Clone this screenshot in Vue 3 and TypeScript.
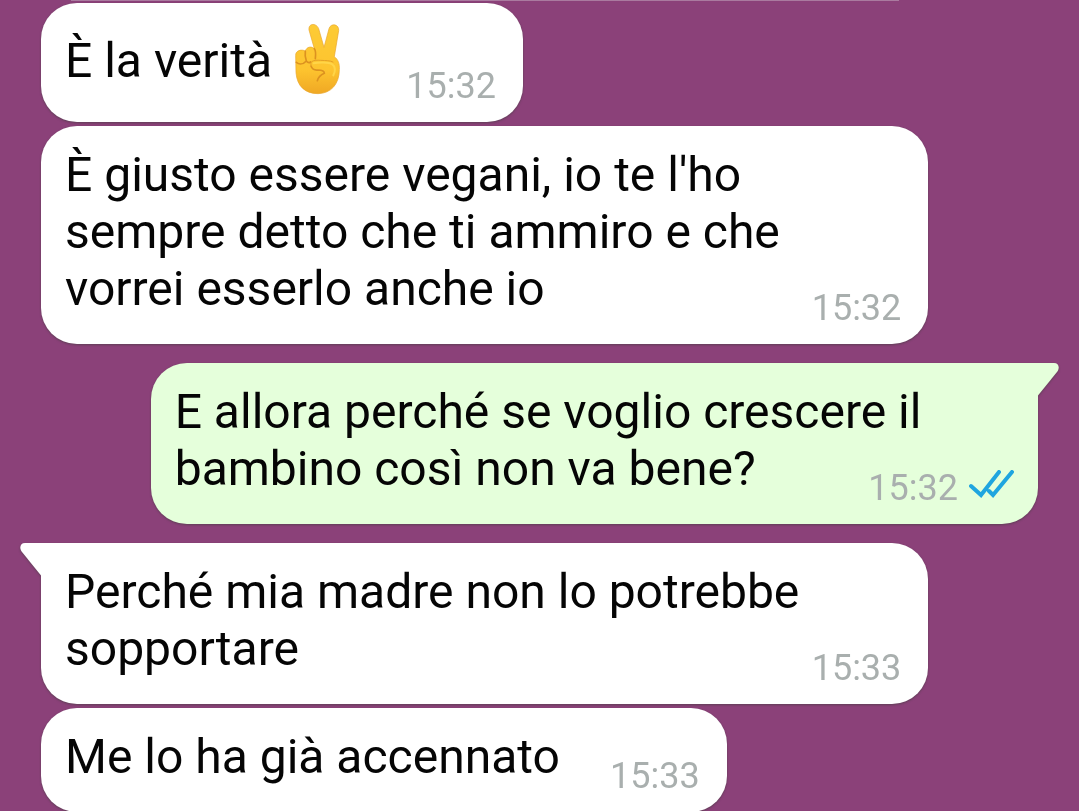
<script setup lang="ts">
interface Message {
  id: number
  text: string
  time: string
  outgoing?: boolean
  tail?: boolean
  emoji?: boolean
}

const messages: Message[] = [
  { id: 1, text: 'È la verità', time: '15:32', emoji: true },
  { id: 2, text: "È giusto essere vegani, io te l'ho sempre detto che ti ammiro e che vorrei esserlo anche io", time: '15:32' },
  { id: 3, text: 'E allora perché se voglio crescere il bambino così non va bene?', time: '15:32', outgoing: true, tail: true },
  { id: 4, text: 'Perché mia madre non lo potrebbe sopportare', time: '15:33', tail: true },
  { id: 5, text: 'Me lo ha già accennato', time: '15:33' },
]
</script>

<template>
  <main class="chat">
    <div class="earlier"></div>
    <ol class="messages">
      <li
        v-for="m in messages"
        :key="m.id"
        class="bubble"
        :class="{ outgoing: m.outgoing, incoming: !m.outgoing, tailed: m.tail }"
      >
        <svg v-if="m.tail" class="tail" viewBox="0 0 22 33" aria-hidden="true">
          <path d="M22 0H5C0 0-1 5 2 9L21 32.500H22Z" />
        </svg>
        <p class="text">
          {{ m.text }}
          <svg v-if="m.emoji" class="emoji" viewBox="12 39 216 216" role="img" aria-label="Vittoria">
            <defs>
              <linearGradient id="skin" x1="0" y1="0" x2="0" y2="1">
                <stop offset="0" stop-color="#fdcb35" />
                <stop offset="0.65" stop-color="#fdc42f" />
                <stop offset="1" stop-color="#f0a824" />
              </linearGradient>
            </defs>
            <path
              d="M87 60C84 39 109 38 116 56L132 112L147 56C152 38 178 42 176 62L163 140C174 148 179 160 178 178C178 222 154 250 114 251C76 251 51 229 48 188L47 137C46 121 65 117 76 123C80 110 94 108 103 116Z"
              fill="url(#skin)"
              stroke="#e9a62e"
              stroke-width="2"
            />
            <path
              d="M103 116C108 122 107 137 106 146M76 124C74 136 77 146 79 153M49 157C58 164 70 163 79 153C83 158 88 159 92 156M93 168C97 179 106 181 114 180C126 180 133 184 133 190C124 194 115 201 112 212"
              fill="none"
              stroke="#dc9220"
              stroke-width="5"
              stroke-linecap="round"
            />
            <path
              d="M93 166C88 150 108 150 122 151C138 152 150 151 159 156"
              fill="none"
              stroke="#e5a026"
              stroke-width="3"
              stroke-linecap="round"
            />
            <path
              d="M101 160C115 157 145 156 157 163C166 169 167 184 160 196"
              fill="none"
              stroke="#ffd548"
              stroke-width="6"
              stroke-linecap="round"
            />
          </svg>
          <span class="reserve"></span>
        </p>
        <div class="meta">
          <time>{{ m.time }}</time>
          <svg v-if="m.outgoing" class="ticks" viewBox="0 0 45 28" role="img" aria-label="Letto">
            <path d="M2 16L12 25L30 2M20 21L24 25L43 2" />
          </svg>
        </div>
      </li>
    </ol>
  </main>
</template>

<style>
body {
  margin: 0;
  background: #8b4179;
}
</style>

<style scoped>
.chat {
  box-sizing: border-box;
  height: 100vh;
  padding: 0 41px;
  overflow: hidden;
  background: #8b4179;
  color: #050505;
  font-family: Roboto, "Liberation Sans", sans-serif;
}

.earlier {
  width: 83%;
  height: 1px;
  margin: 0 0 2px 30px;
  background: #aa7a9f;
}

.messages {
  display: flex;
  flex-direction: column;
  align-items: flex-start;
  gap: 4px;
  margin: 0;
  padding: 0;
  list-style: none;
}

.bubble {
  --fill: #fff;
  position: relative;
  display: grid;
  box-sizing: border-box;
  max-width: 89%;
  padding: 20px 27px 27px 24px;
  border-radius: 36px;
  background: var(--fill);
  filter: drop-shadow(0 1px 1px rgba(50, 60, 50, 0.5));
}

.outgoing {
  --fill: #e5ffdb;
  align-self: flex-end;
  padding-right: 24px;
}

.tailed {
  margin-top: 15px;
}

.incoming.tailed {
  border-top-left-radius: 0;
}

.outgoing.tailed {
  border-top-right-radius: 0;
}

.tail {
  position: absolute;
  top: 0;
  left: -21px;
  width: 22px;
  height: 33px;
  fill: var(--fill);
}

.outgoing .tail {
  right: -21px;
  left: auto;
  transform: scaleX(-1);
}

.text,
.meta {
  grid-area: 1 / 1;
}

.text {
  margin: 0;
  font-size: 48px;
  line-height: 57px;
}

.emoji {
  width: 72px;
  height: 72px;
  margin-right: 12px;
  vertical-align: -18px;
}

.reserve {
  display: inline-block;
  width: 128px;
}

.outgoing .reserve {
  width: 188px;
}

.meta {
  display: flex;
  align-items: flex-end;
  align-self: end;
  justify-self: end;
  gap: 11px;
  margin-bottom: -9px;
  color: #a9afae;
  font-size: 36px;
  line-height: 36px;
}

.ticks {
  width: 45px;
  height: 28px;
  margin-bottom: 8px;
  fill: none;
  stroke: #1fa5df;
  stroke-width: 4;
  stroke-linecap: round;
}
</style>
